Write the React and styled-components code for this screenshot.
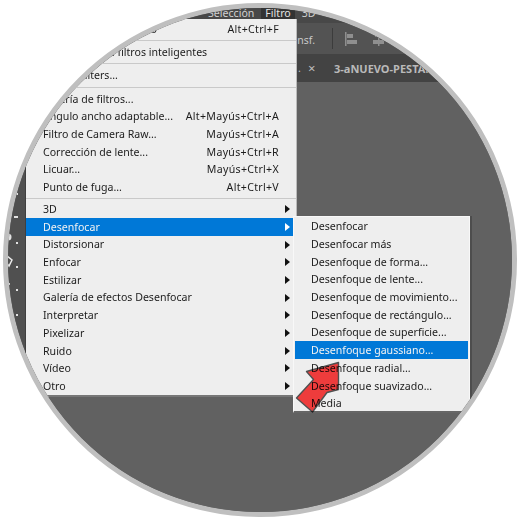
import React from "react";
import styled, { createGlobalStyle } from "styled-components";

const Global = createGlobalStyle`
  html, body { margin: 0; padding: 0; background: #fff; }
  #root { width: 520px; height: 520px; }
`;

const Page = styled.div`
  width: 520px;
  height: 520px;
  padding: 3px;
  box-sizing: border-box;
  background: #fff;
`;

const Circle = styled.div`
  position: relative;
  width: 514px;
  height: 514px;
  box-sizing: border-box;
  border: 5.5px solid #bfbfbf;
  border-radius: 50%;
  overflow: hidden;
  background: #616161;
  display: flex;
  flex-direction: column;
  font-family: "Noto Sans", "Open Sans", sans-serif;
  font-size: 10.6px;
  filter: blur(0.3px);
`;

const MenuBar = styled.div`
  flex: none;
  height: 19px;
  margin-top: -4px;
  background: #484848;
  display: flex;
  align-items: center;
  padding-left: 196px;
  color: #d8d8d8;
`;

const MenuBarItem = styled.div`
  height: 14px;
  line-height: 14px;
  padding: 0 4px;
  margin-right: ${(p) => p.$gap || 0}px;
  margin-top: -1px;
  background: ${(p) => (p.$active ? "#333" : "transparent")};
  color: ${(p) => (p.$active ? "#e4e4e4" : "#d0d0d0")};
`;

const OptionsBar = styled.div`
  flex: none;
  height: 31px;
  background: #535353;
  display: flex;
  align-items: center;
  padding-left: 252px;
  color: #c8c8c8;
  font-size: 10.5px;
`;

const OptionLabel = styled.span`
  width: 55px;
  padding-top: 3px;
  text-align: right;
  flex: none;
  margin-right: 17px;
`;

const VSep = styled.div`
  width: 1px;
  height: 21px;
  background: #3c3c3c;
  margin-right: 11px;
  flex: none;
`;

const AlignIcon = styled.svg`
  width: 16px;
  height: 16px;
  margin-right: 11px;
  flex: none;
`;

const TabBar = styled.div`
  flex: none;
  height: 28px;
  background: #434343;
  display: flex;
  align-items: center;
  padding-left: 290px;
  color: #bdbdbd;
  white-space: nowrap;
`;

const TabDots = styled.span`
  width: 10px;
  flex: none;
`;

const TabClose = styled.span`
  font-size: 13px;
  width: 26px;
  flex: none;
`;

const TabTitle = styled.span`
  font-weight: 700;
  font-size: 11px;
  color: #b9b9b9;
`;

const Workspace = styled.div`
  flex: 1;
  display: flex;
  min-height: 0;
`;

const ToolStrip = styled.div`
  width: 18px;
  flex: none;
  background: #505050;
  border-right: 1px solid #3f3f3f;
  box-sizing: border-box;
`;

const Tools = styled.svg`
  display: block;
  width: 18px;
  height: 330px;
`;

const Canvas = styled.div`
  flex: 1;
  background: #616161;
`;

const Menu = styled.div`
  position: absolute;
  left: 18px;
  top: 10.5px;
  width: 270px;
  box-sizing: border-box;
  padding-top: 2px;
  background: #eeeeee;
  border-bottom: 2px solid #777;
  color: #1c1c1c;
  box-shadow: 1px 0 0 #bbb;
`;

const Row = styled.div`
  height: 17.7px;
  display: flex;
  align-items: center;
  padding-left: 17px;
  padding-right: 17px;
  position: relative;
  white-space: nowrap;
  background: ${(p) => (p.$selected ? "#0078d7" : "transparent")};
  color: ${(p) => (p.$selected ? "#f2f2f2" : "#1c1c1c")};
`;

const RowLabel = styled.span`
  flex: 1;
`;

const Shortcut = styled.span`
  flex: none;
  letter-spacing: 0.3px;
`;

const Caret = styled.span`
  position: absolute;
  right: 6px;
  top: 5px;
  width: 0;
  height: 0;
  border-left: 5px solid ${(p) => (p.$light ? "#fff" : "#111")};
  border-top: 4px solid transparent;
  border-bottom: 4px solid transparent;
`;

const Separator = styled.div`
  height: 1px;
  margin: ${(p) => p.$my}px 0;
  background: #c9c9c9;
`;

const Submenu = styled.div`
  position: absolute;
  left: 267px;
  top: 197.5px;
  width: 177px;
  box-sizing: border-box;
  padding: 0.5px 1px 0 1px;
  height: 197px;
  background: #eeeeee;
  border: 1px solid #f8f8f8;
  border-bottom: 2px solid #666;
  box-shadow: 2px 0 0 #4d4d4d;
`;

const SubRow = styled(Row)`
  padding-left: 16px;
  padding-right: 2px;
`;

const Arrow = styled.svg`
  position: absolute;
  left: 286px;
  top: 352px;
  width: 50px;
  height: 56px;
  mix-blend-mode: multiply;
`;

const topGroups = [
  [["Desenfoque gaussiano", "Alt+Ctrl+F"]],
  [["Convertir para filtros inteligentes"]],
  [["Neural Filters..."]],
  [
    ["Galería de filtros..."],
    ["Ángulo ancho adaptable...", "Alt+Mayús+Ctrl+A"],
    ["Filtro de Camera Raw...", "Mayús+Ctrl+A"],
    ["Corrección de lente...", "Mayús+Ctrl+R"],
    ["Licuar...", "Mayús+Ctrl+X"],
    ["Punto de fuga...", "Alt+Ctrl+V"],
  ],
];

const filterGroups = [
  "3D",
  "Desenfocar",
  "Distorsionar",
  "Enfocar",
  "Estilizar",
  "Galería de efectos Desenfocar",
  "Interpretar",
  "Pixelizar",
  "Ruido",
  "Vídeo",
  "Otro",
];

const blurItems = [
  "Desenfocar",
  "Desenfocar más",
  "Desenfoque de forma...",
  "Desenfoque de lente...",
  "Desenfoque de movimiento...",
  "Desenfoque de rectángulo...",
  "Desenfoque de superficie...",
  "Desenfoque gaussiano...",
  "Desenfoque radial...",
  "Desenfoque suavizado...",
  "Media",
];

export default function App() {
  return (
    <Page>
      <Global />
      <Circle>
        <MenuBar>
          <MenuBarItem $gap={3}>Selección</MenuBarItem>
          <MenuBarItem $active $gap={3}>Filtro</MenuBarItem>
          <MenuBarItem>3D</MenuBarItem>
        </MenuBar>
        <OptionsBar>
          <OptionLabel>Transf.</OptionLabel>
          <VSep />
          <AlignIcon viewBox="0 0 16 16">
            <rect x="1" y="1" width="1.5" height="14" fill="#8f8f8f" />
            <rect x="3" y="3" width="6" height="4" fill="#8f8f8f" />
            <rect x="3" y="9" width="10" height="4" fill="#8f8f8f" />
          </AlignIcon>
          <AlignIcon viewBox="0 0 16 16">
            <rect x="4" y="2" width="7" height="4" fill="#8f8f8f" />
            <rect x="7" y="1" width="1.5" height="14" fill="#8f8f8f" />
            <rect x="2" y="9" width="11" height="4" fill="#8f8f8f" />
          </AlignIcon>
        </OptionsBar>
        <TabBar>
          <TabDots>.</TabDots>
          <TabClose>×</TabClose>
          <TabTitle>3-aNUEVO-PESTAÑA</TabTitle>
        </TabBar>
        <Workspace>
          <ToolStrip>
            <Tools viewBox="0 0 18 330">
              <g fill="#e2e2e2">
                <rect x="8" y="111" width="2" height="2" />
                <rect x="6" y="134" width="2" height="2" />
                <rect x="8" y="134" width="2" height="2" />
                <circle cx="0" cy="155" r="3.5" />
                <rect x="8" y="160" width="2" height="2" />
                <path d="M-1 174 L4 178 L1 184 L-2 180 Z" fill="none" stroke="#e8e8e8" strokeWidth="1.5" />
                <rect x="8" y="184" width="2" height="2" />
                <rect x="0" y="201" width="2" height="2" />
                <rect x="8" y="207" width="2" height="2" />
                <rect x="8" y="232" width="2" height="2" />
              </g>
            </Tools>
          </ToolStrip>
          <Canvas />
        </Workspace>
        <Menu>
          {topGroups.map((group, i) => (
            <React.Fragment key={i}>
              {group.map(([label, keys]) => (
                <Row key={label}>
                  <RowLabel>{label}</RowLabel>
                  {keys && <Shortcut>{keys}</Shortcut>}
                </Row>
              ))}
              <Separator $my={i === topGroups.length - 1 ? 1.7 : 2.2} />
            </React.Fragment>
          ))}
          {filterGroups.map((label) => (
            <Row key={label} $selected={label === "Desenfocar"}>
              <RowLabel>{label}</RowLabel>
              <Caret $light={label === "Desenfocar"} />
            </Row>
          ))}
          <Submenu>
            {blurItems.map((label) => (
              <SubRow key={label} $selected={label === "Desenfoque gaussiano..."}>
                <RowLabel>{label}</RowLabel>
              </SubRow>
            ))}
          </Submenu>
        </Menu>
        <Arrow viewBox="0 0 50 56">
          <path
            d="M44.5 2.5 L44.5 29.5 L33 32.5 L18.5 52 L2.5 38 L19.5 19.5 L12.5 11.5 Z"
            fill="#ff4040"
            stroke="#555"
            strokeWidth="1.4"
            strokeLinejoin="round"
          />
        </Arrow>
      </Circle>
    </Page>
  );
}
